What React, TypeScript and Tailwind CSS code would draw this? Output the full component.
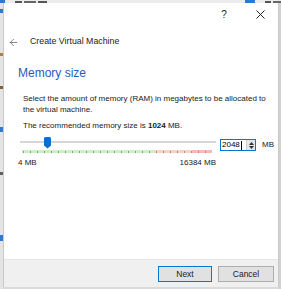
import { ArrowLeft } from "lucide-react";

const font = { fontFamily: '"Liberation Sans", Arial, sans-serif' };

function Ticks() {
  const ticks = Array.from({ length: 28 }, (_, i) => 1 + i * 7);
  return (
    <svg width="190" height="3" viewBox="0 0 190 3" className="block">
      <rect x="0" y="0" width="132" height="3" fill="#c9f2c2" />
      <rect x="132" y="0" width="38" height="3" fill="#fad2c4" />
      <rect x="170" y="0" width="20" height="3" fill="#f8b9ba" />
      {ticks.map((x) => (
        <rect key={x} x={x} y="1" width="1" height="2" fill="#8e9a8c" />
      ))}
    </svg>
  );
}

function Thumb() {
  return (
    <svg width="7" height="12" viewBox="0 0 7 12" className="block">
      <path d="M0 1.5Q0 0 1.5 0H5.5Q7 0 7 1.5V8.5L3.5 11.5L0 8.5Z" fill="#0a6fd0" />
    </svg>
  );
}

function SpinBox() {
  return (
    <div className="mt-[2px] flex h-[12px] w-[36px] items-center border border-[#0078d7] bg-white">
      <div className="flex flex-1 items-center pl-[1px] text-[8px] leading-[10px] text-black">
        2048
        <span className="ml-[1px] h-[9px] w-px bg-black" />
      </div>
      <div className="flex h-full w-[9px] flex-col items-center justify-center gap-[1px] border-l border-[#cfcfcf] bg-[#e6e6e6]">
        <svg width="5" height="3" viewBox="0 0 5 3" className="block">
          <path d="M0 3L2.5 0L5 3Z" fill="#333" />
        </svg>
        <svg width="5" height="3" viewBox="0 0 5 3" className="block">
          <path d="M0 0L2.5 3L5 0Z" fill="#333" />
        </svg>
      </div>
    </div>
  );
}

export default function App() {
  return (
    <div className="flex h-[289px] w-[281px] flex-col overflow-hidden bg-[#dadada]" style={font}>
      {/* background windows peeking out at the top */}
      <div className="flex h-[3px] shrink-0 items-end overflow-hidden bg-[#ececec]">
        <div className="h-full w-[5px] bg-[#2b7bd6]" />
        <div className="ml-[10px] flex h-[2px] gap-[2px]">
          <div className="w-[7px] bg-[#555]" />
          <div className="w-[12px] bg-[#666]" />
          <div className="w-[9px] bg-[#555]" />
        </div>
        <div className="ml-auto h-full w-[10px] bg-[#2b7bd6]" />
        <div className="ml-[10px] flex h-[2px] w-[16px] gap-[2px]">
          <div className="w-[6px] bg-[#555]" />
          <div className="w-[8px] bg-[#666]" />
        </div>
      </div>

      <div className="flex flex-1">
        <div className="flex w-[3px] flex-col bg-[#e4e4e4]">
          <div className="mt-[6px] h-[4px] bg-[#2b7bd6]" />
          <div className="mt-[40px] h-[3px] bg-[#b08040]" />
          <div className="mt-[30px] h-[3px] bg-[#806040]" />
          <div className="mt-[38px] h-[5px] bg-[#2b7bd6]" />
          <div className="mt-[40px] h-[3px] bg-[#606060]" />
          <div className="mt-[60px] h-[6px] bg-[#2b7bd6]" />
        </div>

        <div className="flex h-[284px] w-[276px] flex-col border-x border-[#c9c9c9] bg-white">
          {/* title bar */}
          <div className="flex h-[22px] shrink-0 justify-end">
            <div className="flex w-[36px] items-center justify-center text-[10px] text-[#222]">?</div>
            <div className="flex w-[36px] items-center justify-center">
              <svg width="9" height="9" viewBox="0 0 9 9" className="block">
                <path d="M0.5 0.5L8.5 8.5M8.5 0.5L0.5 8.5" stroke="#222" strokeWidth="1" />
              </svg>
            </div>
          </div>

          {/* wizard header */}
          <div className="flex h-[34px] shrink-0 items-center pl-[4px]">
            <ArrowLeft size={11} strokeWidth={1.4} color="#444" />
            <span className="ml-[11px] text-[8.8px] text-[#1a1a1a]">Create Virtual Machine</span>
          </div>

          <div className="flex flex-1 flex-col pl-[14px]">
            <div className="mt-[7px] text-[12px] leading-[14px] text-[#1f5bc4]">Memory size</div>

            <div className="mt-[13px] pl-[5px] text-[8px] leading-[11px] text-[#1a1a1a]">
              <p>Select the amount of memory (RAM) in megabytes to be allocated to the virtual machine.</p>
              <p className="mt-[5px]">
                The recommended memory size is <b>1024</b> MB.
              </p>
            </div>

            <div className="mt-[6px] flex items-start">
              <div className="flex w-[198px] flex-col">
                <div className="relative h-[12px] pl-[2px]">
                  <div className="mt-[4px] h-[2px] bg-[#d6d6d6]" />
                  <div className="absolute left-[26px] top-0">
                    <Thumb />
                  </div>
                </div>
                <div className="ml-[4px] mt-[1px]">
                  <Ticks />
                </div>
                <div className="mt-[5px] flex justify-between text-[8px] leading-[10px] text-[#1a1a1a]">
                  <span>4 MB</span>
                  <span>16384 MB</span>
                </div>
              </div>
              <div className="ml-[4px]">
                <SpinBox />
              </div>
              <span className="ml-[6px] mt-[3px] text-[8px] leading-[10px] text-[#1a1a1a]">MB</span>
            </div>
          </div>

          {/* footer */}
          <div className="flex h-[28px] shrink-0 items-start justify-end gap-[6px] border-t border-[#e6e6e6] bg-[#f0f0f0] pr-[4px] pt-[6px]">
            <button className="flex h-[16px] w-[54px] items-center justify-center border border-[#0078d7] bg-[#e1e1e1] text-[8.5px] text-[#1a1a1a]">
              Next
            </button>
            <button className="flex h-[16px] w-[56px] items-center justify-center border border-[#adadad] bg-[#e1e1e1] text-[8.5px] text-[#1a1a1a]">
              Cancel
            </button>
          </div>
        </div>

        <div className="flex-1 bg-[#d2d2d2]" />
      </div>
    </div>
  );
}
